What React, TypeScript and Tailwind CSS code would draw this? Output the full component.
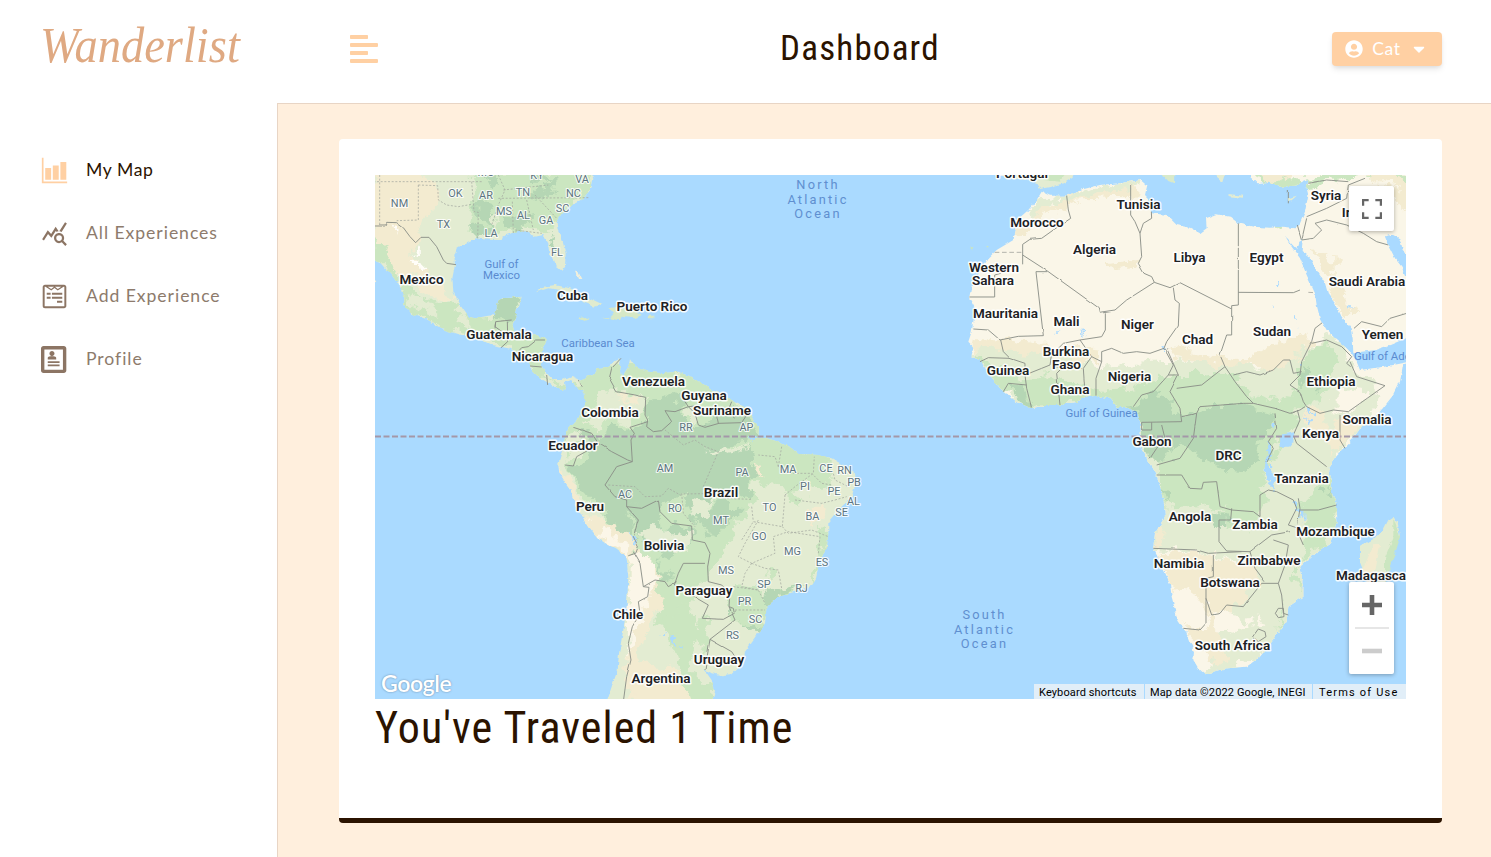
import { FaAlignLeft, FaCaretDown, FaUserCircle, FaWpforms } from 'react-icons/fa';
import { ImProfile } from 'react-icons/im';
import { IoBarChartSharp } from 'react-icons/io5';
import { MdQueryStats } from 'react-icons/md';

const NORTH_AMERICA =
  'M-10,-10 650,-10 655,10 650,40 620,75 590,90 560,115 545,140 548,165 562,195 572,235 570,270 560,287 545,275 535,250 522,235 520,205 505,180 480,185 450,168 410,175 385,183 380,195 350,195 300,190 270,205 245,220 238,240 240,270 232,310 235,350 255,390 280,425 300,430 340,422 360,420 370,380 385,370 440,365 435,385 425,405 420,430 412,450 420,475 450,480 480,478 515,495 505,520 500,560 500,575 520,600 535,615 560,615 590,603 610,612 628,625 628,650 612,645 600,628 585,615 570,622 572,640 560,645 530,630 505,615 485,600 465,580 465,560 430,535 400,520 350,510 330,500 290,480 260,480 210,465 150,430 115,420 85,390 85,365 75,335 50,300 20,265 -10,252Z';

const SOUTH_AMERICA =
  'M105,125 120,165 120,195 100,235 70,265 58,300 52,330 40,370 42,395 60,425 78,450 95,500 112,530 135,565 165,600 210,625 245,650 250,720 245,800 235,870 222,940 218,990 200,1040 183,1090 500,1090 510,1050 500,1020 475,985 500,1000 530,1006 560,1002 593,968 600,935 630,895 660,850 665,800 700,770 750,755 790,745 810,715 820,670 845,625 850,580 850,545 880,510 920,470 932,430 925,395 905,382 860,355 820,345 760,342 740,325 700,305 665,295 640,292 642,260 620,235 605,205 570,185 540,170 470,130 430,108 400,95 350,100 310,95 270,80 255,58 250,80 235,105 222,90 228,55 200,68 190,80 155,85 145,105 125,110Z';

const AFRICA =
  'M245,50 270,62 320,62 360,45 420,30 480,25 545,15 562,30 555,60 575,80 570,100 575,115 620,120 650,150 690,158 720,175 740,160 738,130 770,118 810,125 835,145 880,155 930,158 970,155 1005,160 1020,145 1035,110 1045,60 1040,40 1045,15 1030,20 1005,32 960,35 930,20 890,25 870,5 870,-15 1350,-15 1350,562 1330,568 1320,620 1300,660 1260,710 1220,750 1195,765 1170,800 1130,840 1105,875 1115,915 1110,945 1130,985 1132,1045 1110,1105 1070,1130 1020,1175 1030,1215 1030,1265 985,1295 980,1340 940,1395 900,1445 860,1475 800,1480 735,1498 715,1480 700,1455 702,1430 685,1385 655,1340 635,1265 630,1225 600,1160 580,1120 585,1075 615,1025 610,965 590,900 565,855 540,815 543,750 535,720 510,700 470,695 450,670 410,662 380,665 350,680 300,690 260,690 215,700 170,680 120,640 90,600 60,555 35,545 40,515 25,500 35,470 40,440 45,400 28,370 35,330 60,290 85,250 110,225 160,195 170,160 165,140 205,105 230,75Z';

const MADAGASCAR =
  'M1300,1025 1313,1045 1320,1085 1306,1105 1292,1165 1275,1225 1260,1290 1230,1290 1215,1240 1222,1220 1200,1165 1200,1115 1240,1092 1270,1065 1285,1035Z';

const RED_SEA =
  'M975,182 995,215 1020,250 1040,300 1065,355 1070,390 1080,430 1100,465 1125,490 1150,510 1175,535 1190,560 1200,585 1270,575 1350,560 1350,485 1290,510 1245,525 1205,530 1180,535 1178,490 1172,460 1145,425 1125,385 1105,360 1095,325 1070,285 1048,245 1025,228 1028,195 1018,200 1012,222Z';

const PERSIAN_GULF = 'M1275,185 1295,178 1318,190 1328,225 1350,245 1350,310 1335,300 1325,275 1305,250 1285,210Z';

const NA_BORDERS =
  'M-5,153 30,153 35,142 65,143 85,158 105,185 122,203 138,187 162,187 185,215 205,255 215,265 243,269 M360,460 362,440 410,435 M362,442 360,455 395,480 398,500 378,518 M397,440 398,485 430,480 M425,535 440,518 460,515 485,495 510,495 M465,573 500,576 M515,600 518,630 M610,615 625,640';
const NA_STATES =
  'M-5,20 320,20 M14,0 14,153 M130,30 130,135 65,137 M130,30 188,32 190,75 215,90 250,95 290,88 M290,20 297,110 310,112 308,190 M370,0 390,45 370,90 350,150 M412,80 415,175 M370,70 640,68 M455,75 475,165 M420,165 500,175 M385,45 520,30 M480,60 545,130';

const SA_BORDERS =
  'M228,55 200,85 193,115 215,155 270,165 302,172 300,225 308,240 305,260 325,275 350,272 380,245 360,212 390,215 430,200 450,198 M410,170 430,200 450,220 460,255 480,262 522,250 590,248 605,225 M510,200 520,250 M560,185 552,205 568,235 M85,262 140,280 160,310 200,335 248,360 262,365 258,300 268,280 255,262 308,245 M60,375 85,378 95,350 140,325 145,305 M262,365 215,380 180,435 210,470 245,480 245,500 290,505 340,480 345,515 380,550 440,558 442,600 480,608 495,640 488,680 490,725 530,735 555,760 552,800 565,805 568,820 535,838 472,835 490,795 430,760 388,735 400,700 415,670 480,670 M245,500 280,540 265,590 280,620 272,640 250,647 M265,635 285,670 295,740 330,720 360,725 370,740 395,725 M295,740 312,742 308,770 280,785 285,820 262,860 250,910 258,960 245,1010 235,1085 M552,800 570,840 495,898 480,990 M495,898 560,935 580,965';
const SA_STATES =
  'M190,435 270,440 300,470 350,468 370,445 415,470 M415,462 535,460 M475,440 520,335 480,320 450,300 415,315 360,270 M535,475 620,478 M410,460 415,520 450,560 M620,500 625,545 M710,320 700,380 740,400 800,400 830,430 860,435 M700,380 690,350 640,345 M720,465 750,440 805,400 808,350 M720,465 712,560 625,545 590,600 M750,480 830,490 870,480 M860,380 870,420 910,440 M870,480 905,470 M712,560 730,580 800,570 850,590 M640,540 600,610 580,650 620,670 690,640 685,590 730,575 825,590 820,640 M620,670 600,700 590,740 640,750 M620,670 660,685 700,690 710,745 M565,740 640,750 660,790 M570,810 660,810';

const AFRICA_BORDERS =
  'M320,62 325,105 332,130 310,145 280,165 245,190 210,193 188,208 188,268 M188,240 262,288 415,398 418,412 465,405 500,375 583,322 630,338 660,323 815,402 815,392 835,390 835,145 M262,290 228,290 250,482 175,484 120,495 85,465 40,462 M122,295 104,300 104,366 28,366 M436,412 436,465 425,485 360,495 310,505 275,540 270,570 M583,322 575,305 552,295 535,265 545,245 540,175 525,140 512,120 512,30 M540,175 550,145 575,130 574,110 M640,338 645,375 658,385 655,450 620,500 612,520 570,535 530,530 490,535 455,520 425,530 425,560 408,610 408,662 M425,560 395,545 370,580 375,655 M360,495 395,545 M310,575 290,595 300,690 M122,495 130,530 150,550 85,548 60,560 M150,550 195,565 195,600 245,580 270,570 M145,625 130,650 M195,600 200,640 215,700 M145,625 200,630 M280,575 365,580 M612,520 640,570 625,600 580,650 545,660 520,695 M620,520 655,600 625,600 M655,600 630,650 660,700 665,740 545,742 M815,402 815,480 800,480 780,540 795,575 725,630 650,640 M795,575 825,620 860,665 880,685 M665,725 710,715 720,695 850,685 880,685 945,700 990,715 1020,705 1035,695 M820,600 860,590 900,600 940,585 970,555 990,555 1000,595 1025,590 M835,352 1000,353 1020,345 M1097,435 1065,460 1055,500 1025,560 1020,600 990,630 1020,650 1030,680 1040,695 1080,715 1120,705 1165,710 1275,632 1190,605 1170,560 M1055,505 1100,495 1145,515 1175,545 1160,565 1172,575 M545,742 545,765 575,765 575,742 M605,750 615,790 590,820 570,850 M710,715 700,790 660,850 590,870 M945,715 950,760 925,800 M1012,705 1020,735 1000,780 1010,805 1100,875 M1140,720 1140,795 1155,820 M590,900 665,900 690,940 725,942 730,922 770,920 780,995 815,1005 880,1010 900,1025 900,960 925,945 950,950 1000,975 1010,1000 985,1050 1015,1060 M1020,1005 1075,1005 1130,990 M815,1000 812,1035 777,1035 777,1100 800,1128 870,1130 915,1095 935,1080 990,1070 M580,1120 710,1125 745,1135 845,1130 M760,1140 760,1205 738,1210 738,1345 720,1365 670,1360 M738,1270 755,1320 780,1315 800,1290 850,1295 865,1275 905,1225 955,1225 975,1170 985,1110 940,1095 M870,1130 885,1180 915,1220 M955,1225 965,1260 970,1315 985,1320 M946,1315 955,1300 970,1300 972,1325 955,1328Z M878,1385 895,1362 915,1370 918,1385 895,1400Z M1015,970 1020,1000 1010,1065 1030,1110 M1025,195 1060,190 1085,165 1065,145 1100,135 1160,150 1210,175 1250,200 1285,210 M1040,125 1100,100 1160,70 1165,30 1215,10 M1045,25 1100,15 1165,20 M1205,440 1265,455 1290,430 1350,412 M1182,460 1205,440 M1012,150 1025,195 1040,130 M925,800 940,820 920,860 M985,45 985,85';

type Shape = [fill: string, d: string];

const NA_TERRAIN: Shape[] = [
  ['#f3ebd0', 'M-10,-10 120,-10 190,25 190,90 150,140 110,230 190,310 230,380 200,385 130,330 80,300 30,230 -10,190Z'],
  ['#cbe6c0', 'M-10,190 25,220 60,270 90,320 140,375 220,390 260,430 350,425 370,375 440,360 420,450 520,490 500,560 530,620 628,620 628,650 560,645 460,570 380,510 240,470 120,420 80,380 60,310 0,255Z'],
  ['#cbe6c0', 'M290,10 350,-10 660,-10 640,60 570,100 540,150 500,175 440,160 400,180 280,170 300,100Z'],
  ['#b5d6b4', 'M372,375 440,362 418,430 362,435 350,420Z'],
  ['#b5d6b4', 'M315,0 360,-5 380,20 345,30Z M310,75 345,80 360,120 350,150 310,130Z M280,145 340,150 350,180 290,175Z M470,60 545,10 570,15 515,70 470,90Z M385,130 450,100 475,120 430,165 390,165Z M520,170 535,190 550,225 540,235Z M470,0 500,-5 530,20 475,20Z'],
  ['#fffdf8', 'M50,150 65,165 60,180Z M115,260 150,260 140,285 125,275Z M125,220 135,230 125,240Z'],
  ['#e3ecd2', 'M90,350 150,380 200,420 180,425 110,390Z M250,425 290,440 280,460 240,450Z M345,110 370,120 350,155Z'],
];

const SA_TERRAIN: Shape[] = [
  ['#cbe6c0', 'M110,80 260,60 450,100 640,230 760,340 860,355 860,440 790,430 740,470 710,440 640,430 560,600 450,760 420,900 330,860 340,700 100,460 40,300Z'],
  ['#b5d6b4', 'M75,262 165,285 245,250 300,260 300,190 350,160 420,170 400,210 450,255 560,200 610,215 635,250 625,290 530,330 600,320 640,400 625,455 580,480 530,465 490,510 540,490 590,500 560,550 500,590 460,560 430,470 350,480 250,500 270,600 230,590 180,520 120,460 80,400 130,340 100,290Z'],
  ['#b5d6b4', 'M245,500 340,480 350,560 440,560 440,600 350,660 370,720 350,730 350,640 290,590Z'],
  ['#e3ecd2', 'M205,170 300,165 295,215 250,245 190,235 150,270 160,220Z M415,200 450,200 455,240 425,240Z M490,335 600,315 560,340 500,350Z M450,480 510,490 480,530 440,510Z M280,575 360,560 390,590 430,570 430,620 380,640Z'],
  ['#f3ebd0', 'M35,370 80,430 130,530 190,545 270,600 280,650 350,700 340,780 310,850 280,970 320,1085 235,1085 255,880 250,650 120,560 50,430Z'],
  ['#f3ebd0', 'M270,960 400,990 440,1090 260,1090Z M205,175 290,170 270,190Z M630,370 690,400 640,415Z M790,500 840,500 800,560Z'],
  ['#fbf6e8', 'M250,640 285,640 330,680 350,725 320,760 290,820 270,870 250,960 245,850 252,720Z M180,570 250,610 245,640 170,590Z M130,540 150,580 100,500Z'],
  ['#cbe6c0', 'M750,340 860,355 830,400 770,390Z M720,460 780,470 750,510Z M660,320 720,350 700,420 650,400Z M830,560 850,590 820,710 790,740 815,650Z M560,740 640,750 660,770 780,730 740,765 670,800 640,860 560,850Z M450,880 490,830 480,960Z M360,840 430,790 460,880 420,990 500,1030 510,1090 440,1090 410,1010Z M670,680 700,690 690,720 660,715Z'],
  ['#b5d6b4', 'M650,770 690,760 770,735 720,770 670,800Z M545,810 568,800 560,830Z M590,850 650,860 640,880Z'],
  ['#aadaff', 'M255,590 272,600 265,615Z M385,905 405,895 400,918Z M340,900 368,872 345,904Z M610,935 632,900 605,925Z M615,290 630,290 605,320Z'],
  ['#e3ecd2', 'M80,265 105,275 100,330 75,370 55,350Z M180,150 215,155 160,235 120,250Z'],
];

const AF_TERRAIN: Shape[] = [
  ['#e3ecd2', 'M0,535 130,520 290,530 420,575 620,560 700,560 800,560 900,590 980,540 1040,520 1110,480 1170,530 1180,590 1260,640 1240,700 1200,770 1130,850 1140,1050 1040,1260 960,1400 800,1500 730,1500 770,1390 790,1310 880,1240 860,1150 560,1120 500,780 200,720Z'],
  ['#f3ebd0', 'M25,490 130,490 300,520 420,530 420,565 280,545 120,525 40,530Z M620,520 790,545 850,560 960,500 1030,480 1060,500 1000,550 930,585 800,570 650,555Z M175,160 240,100 300,90 330,55 510,30 540,70 460,75 350,80 260,130 180,190Z M430,265 530,250 525,275 460,285Z'],
  ['#e3ecd2', 'M230,70 330,65 420,32 540,18 545,35 440,55 260,95 200,130Z'],
  ['#cbe6c0', 'M40,545 110,570 200,610 300,600 380,640 450,650 520,640 600,600 700,600 820,595 870,660 960,680 1020,630 1020,560 1060,510 1100,500 1140,560 1080,680 1020,710 960,790 920,890 900,1010 780,1010 730,990 600,1000 600,880 540,740 460,690 350,680 210,700 120,650Z'],
  ['#b5d6b4', 'M150,625 190,620 210,700 150,665Z M520,690 590,650 640,680 665,730 710,715 740,690 850,690 940,720 935,770 900,800 890,860 830,890 760,870 700,830 650,790 630,850 570,860 540,750Z'],
  ['#cbe6c0', 'M1105,880 1140,1050 1070,1130 1000,1170 1030,1220 1020,1260 1000,1190 1040,1070 1010,1000 1080,940Z M790,1005 900,1010 880,1060 800,1060Z M980,1270 950,1370 970,1330Z M920,158 975,155 950,178Z'],
  ['#b5d6b4', 'M1030,570 1060,590 1040,620 1020,640Z M1060,620 1080,640 1070,660Z M610,940 630,950 625,1000Z M1300,1060 1318,1085 1300,1110Z M1095,930 1110,960 1090,960Z M750,1010 800,1020 795,1050 760,1050Z'],
  ['#f3ebd0', 'M600,1010 615,1025 600,1110 580,1110Z M600,1130 750,1140 870,1160 900,1220 840,1290 770,1360 800,1450 740,1470 720,1400 680,1360 640,1250Z M1140,730 1200,730 1170,800 1120,830 1100,780Z M1060,225 1100,250 1130,250 1130,300 1080,290Z M1110,340 1150,350 1190,420 1150,420Z M1250,40 1350,50 1350,110 1280,60Z M1040,700 1100,720 1080,790 1040,750Z'],
  ['#fbf6e8', 'M640,1230 700,1240 740,1300 730,1370 690,1350 650,1320Z M750,1300 830,1320 870,1350 830,1380 760,1370Z M880,1330 920,1340 900,1360Z M1130,640 1230,650 1200,710 1130,700Z'],
  ['#cbe6c0', 'M865,-10 960,-10 990,10 1045,10 1100,-10 1350,-10 1350,20 1200,5 1040,40 950,40Z'],
  ['#f3ebd0', 'M890,-10 1010,-10 960,20Z M1200,-10 1300,-10 1350,30 1350,60Z'],
  ['#aadaff', 'M918,805 930,810 930,880 950,920 945,950 920,900Z M1010,975 1020,975 1022,1050 1012,1030Z M1045,700 1055,720 1052,738 1042,715Z M940,745 955,740 942,765Z M1015,555 1025,552 1022,565Z M945,335 968,315 955,345Z M935,380 940,390 938,400Z M1000,415 1025,455 1005,435Z M1170,385 1176,380 1172,408Z M600,515 612,510 610,525Z M355,455 372,485 360,475Z M275,475 305,460 290,470Z'],
];

type Label = [text: string, x: number, y: number];

const COUNTRIES: Label[] = [
  ['Mexico', 421.5, 284], ['Cuba', 572.5, 300.5], ['Puerto Rico', 652, 311.5], ['Guatemala', 499, 339.5],
  ['Nicaragua', 542.5, 361.5], ['Venezuela', 653.5, 386.5], ['Guyana', 704, 400], ['Suriname', 722, 415.5],
  ['Colombia', 610, 417], ['Ecuador', 573, 450.5], ['Brazil', 721, 497], ['Peru', 590, 511.5],
  ['Bolivia', 664, 550.5], ['Paraguay', 704, 595], ['Chile', 628, 619.5], ['Uruguay', 719, 664],
  ['Argentina', 661, 683], ['Portugal', 1022, 178], ['Morocco', 1037, 227], ['Tunisia', 1138.5, 209.5],
  ['Algeria', 1094.5, 254], ['Libya', 1189.5, 262], ['Egypt', 1266.5, 262], ['Syria', 1326, 200],
  ['Western', 994, 272], ['Sahara', 993, 285.5], ['Mauritania', 1005.5, 318], ['Mali', 1066.5, 326],
  ['Niger', 1137.5, 329], ['Chad', 1197.5, 344.5], ['Sudan', 1272, 336], ['Saudi Arabia', 1367, 286],
  ['Yemen', 1382.5, 339], ['Burkina', 1066, 356], ['Faso', 1066.5, 369.5], ['Guinea', 1008, 375],
  ['Ghana', 1070, 394.5], ['Nigeria', 1129.5, 381], ['Ethiopia', 1331, 386], ['Somalia', 1367, 424],
  ['Kenya', 1320.5, 438.5], ['Gabon', 1152, 446.5], ['DRC', 1228.5, 460.5], ['Tanzania', 1301.5, 483.5],
  ['Angola', 1190, 521.5], ['Zambia', 1255, 529], ['Mozambique', 1335.5, 536.5], ['Namibia', 1179, 568],
  ['Zimbabwe', 1269, 565.5], ['Botswana', 1230, 587.5], ['South Africa', 1232.5, 650], ['Madagascar', 1373.5, 580.5],
  ['Iraq', 1353.5, 217],
];

const STATES: Label[] = [
  ['NM', 399.5, 207], ['OK', 455.5, 197.5], ['AR', 486, 199], ['TN', 523, 196], ['KY', 537, 179.5], ['MO', 486, 176.5],
  ['VA', 582, 183], ['NC', 573.5, 197], ['SC', 562.5, 212.5], ['MS', 504, 215], ['AL', 523.5, 219], ['GA', 546, 224.5],
  ['TX', 443.5, 228.5], ['LA', 491, 237.5], ['FL', 557, 256.5], ['RR', 686, 431], ['AP', 746.5, 431],
  ['AM', 665, 472.5], ['PA', 742, 476], ['MA', 788, 473], ['CE', 826, 472], ['RN', 844.5, 474.5], ['PB', 854, 486.5],
  ['PI', 805, 490], ['PE', 834, 495], ['AL', 853.5, 505], ['SE', 841.5, 516], ['AC', 625, 498], ['RO', 675, 512],
  ['TO', 769.5, 511], ['BA', 812.5, 520.5], ['MT', 721, 524], ['GO', 759, 540], ['MG', 792.5, 555], ['ES', 822, 566],
  ['MS', 726, 574.5], ['SP', 764, 588], ['RJ', 801.5, 592.5], ['PR', 744.5, 605], ['SC', 755.5, 623], ['RS', 732.5, 639.5],
];

const SEAS: Label[] = [
  ['Gulf of', 501.5, 268.5], ['Mexico', 501.5, 279.5], ['Caribbean Sea', 598, 347], ['Gulf of Guinea', 1101.5, 417], ['Gulf of Aden', 1385.5, 360],
];

const OCEANS: Label[] = [
  ['North', 818, 189.5], ['Atlantic', 818, 204], ['Ocean', 818, 218.5],
  ['South', 984.5, 619.5], ['Atlantic', 984.5, 634], ['Ocean', 984.5, 648.5],
];

type RegionProps = {
  id: string;
  origin: string;
  base: string;
  land: string;
  terrain: Shape[];
  borders: string;
  states?: string;
};

function Region({ id, origin, base, land, terrain, borders, states }: RegionProps) {
  return (
    <g transform={`translate(${origin}) scale(0.33333)`} strokeLinejoin="round">
      <clipPath id={id}>
        <path d={land} />
      </clipPath>
      <g filter="url(#rugged)">
        <path d={land} fill={base} />
        <g clipPath={`url(#${id})`}>
          {terrain.map(([fill, d], i) => (
            <path key={i} d={d} fill={fill} filter="url(#terrain)" />
          ))}
        </g>
      </g>
      <path d={borders} fill="none" stroke="#8b8f88" strokeWidth="2.8" filter="url(#wavy)" />
      {states && <path d={states} fill="none" stroke="#a3a79f" strokeWidth="2.2" strokeDasharray="6 5" />}
    </g>
  );
}

function Labels({ items, className }: { items: Label[]; className: string }) {
  return (
    <g className={className} textAnchor="middle" transform="translate(0 -0.4)">
      {items.map(([text, x, y], i) => (
        <text key={i} x={x} y={y}>
          {text}
        </text>
      ))}
    </g>
  );
}

function WorldMap() {
  return (
    <svg viewBox="375 175 1031 524" className="block h-full w-full font-['Roboto',sans-serif]">
      <defs>
        <filter id="rugged" x="-5%" y="-5%" width="110%" height="110%">
          <feTurbulence type="fractalNoise" baseFrequency="0.05" numOctaves="3" seed="4" result="n" />
          <feDisplacementMap in="SourceGraphic" in2="n" scale="13" xChannelSelector="R" yChannelSelector="G" />
        </filter>
        <filter id="wavy" x="-5%" y="-5%" width="110%" height="110%">
          <feTurbulence type="fractalNoise" baseFrequency="0.03" numOctaves="1" seed="4" result="n" />
          <feDisplacementMap in="SourceGraphic" in2="n" scale="7" xChannelSelector="R" yChannelSelector="G" />
        </filter>
        <filter id="terrain" x="-10%" y="-10%" width="120%" height="120%">
          <feTurbulence type="fractalNoise" baseFrequency="0.022" numOctaves="4" seed="9" result="n" />
          <feDisplacementMap in="SourceGraphic" in2="n" scale="65" xChannelSelector="R" yChannelSelector="G" />
        </filter>
      </defs>
      <rect x="375" y="175" width="1031" height="524" fill="#aadaff" />
      <Region id="north" origin="375 175" base="#e3ecd2" land={NORTH_AMERICA} terrain={NA_TERRAIN} borders={NA_BORDERS} states={NA_STATES} />
      <Region id="south" origin="545 340" base="#e3ecd2" land={SOUTH_AMERICA} terrain={SA_TERRAIN} borders={SA_BORDERS} states={SA_STATES} />
      <Region id="africa" origin="960 175" base="#faf6e8" land={AFRICA} terrain={AF_TERRAIN} borders={AFRICA_BORDERS} />
      <g transform="translate(960 175) scale(0.33333)">
        <g filter="url(#rugged)">
          <path d={RED_SEA} fill="#aadaff" />
          <path d={PERSIAN_GULF} fill="#aadaff" />
          <path d="M968,778 1003,772 1000,800 988,815 963,815 960,795Z" fill="#aadaff" />
          <path d={MADAGASCAR} fill="#e3ecd2" />
          <path d="M1300,1030 1320,1085 1300,1150 1275,1225 1275,1150 1300,1090Z" fill="#cbe6c0" />
          <path d="M1210,1180 1240,1110 1260,1110 1240,1220 1220,1220Z" fill="#f3ebd0" />
          <path d="M60,-10 175,12 225,18 240,42 270,36 312,25 338,8 342,-10Z" fill="#e3ecd2" />
          <path d="M150,-10 250,-10 320,-5 300,20 200,10Z" fill="#cbe6c0" />
          <path d="M598,-10 625,18 645,26 646,-10Z" fill="#d9eaca" />
          <path d="M765,-10 775,12 790,25 796,5 790,-10Z M805,57 850,62 845,68 808,64Z M978,72 1010,62 995,76 982,78Z" fill="#e3ecd2" />
          <path d="M30,218 40,215 36,224Z M78,214 86,212 84,218Z" fill="#cbe6c0" />
        </g>
        <path d="M1045,352 1065,353 M104,232 186,232" fill="none" stroke="#b4b4ac" strokeWidth="3" strokeDasharray="14 8" />
      </g>
      <g transform="translate(375 175) scale(0.33333)" filter="url(#rugged)">
        <path d="M483,352 505,335 540,330 585,340 620,358 655,375 682,388 660,395 625,382 600,360 560,345 520,340Z" fill="#e0ebcf" />
        <path d="M610,430 625,424 645,432 630,438Z M682,428 705,425 718,410 700,400 730,395 770,400 800,420 780,430 740,425 735,436 700,430Z M820,422 840,422 838,430 822,430Z" fill="#d6e8c6" />
        <path d="M603,290 612,292 622,312 612,312Z M-5,310 5,320 -5,330Z" fill="#f0efdc" />
      </g>
      <path d="M375 436.5H1406" stroke="#a497a8" strokeWidth="2" strokeDasharray="6 2.5" />
      <Labels items={OCEANS} className="fill-[#5f8fd0] text-[12.8px] tracking-[2.2px]" />
      <Labels items={SEAS} className="fill-[#5a8bd0] text-[11.4px]" />
      <Labels
        items={STATES}
        className="fill-[#5c7480] stroke-white/80 stroke-[2.2px] text-[10.9px] [paint-order:stroke] [stroke-linejoin:round]"
      />
      <Labels
        items={COUNTRIES}
        className="fill-[#202124] stroke-white/90 stroke-[3px] text-[13.5px] font-semibold [paint-order:stroke] [stroke-linejoin:round]"
      />
    </svg>
  );
}

function MapPanel() {
  return (
    <div className="relative h-[524px] w-full overflow-hidden">
      <WorldMap />
      <button className="absolute top-[11px] right-3 flex size-[45px] items-center justify-center rounded-[2px] bg-white shadow-[0_1px_4px_rgba(0,0,0,0.3)]">
        <svg viewBox="0 0 18 18" className="size-5 fill-[#666]">
          <path d="M0 0v6h2V2h4V0H0zm16 0h-4v2h4v4h2V0h-2zm0 16h-4v2h6v-6h-2v4zM2 12H0v6h6v-2H2v-4z" />
        </svg>
      </button>
      <div className="absolute right-3 bottom-[25px] flex h-[92px] w-[45px] flex-col items-center rounded-[2px] bg-white shadow-[0_1px_4px_rgba(0,0,0,0.3)]">
        <button className="flex h-[45px] items-center">
          <svg viewBox="0 0 20 20" className="size-5 fill-[#666]">
            <path d="M7.7 0h4.6v7.7H20v4.6h-7.7V20H7.7v-7.7H0V7.7h7.7z" />
          </svg>
        </button>
        <div className="h-0.5 w-[34px] bg-[#e6e6e6]" />
        <button className="flex h-[43px] items-center">
          <svg viewBox="0 0 20 20" className="size-5 fill-[#ccc]">
            <path d="M0 7.7h20v4.6H0z" />
          </svg>
        </button>
      </div>
      <span className="absolute bottom-0 left-[6px] font-['Lato',sans-serif] text-[23px] leading-[31px] font-semibold tracking-[-0.4px] text-white [text-shadow:0_0_2px_rgba(80,110,140,0.8)]">
        Google
      </span>
      <div className="absolute right-0 bottom-0 flex h-[15px] gap-px font-['Roboto',sans-serif] text-[11px] leading-[17px] whitespace-nowrap text-black">
        <span className="w-[110px] bg-[#e1eef8] pl-[5px] tracking-[0.12px]">Keyboard shortcuts</span>
        <span className="w-[167px] bg-[#e1eef8] pl-[5px] tracking-[0.12px]">Map data ©2022 Google, INEGI</span>
        <span className="w-[93px] bg-[#e1eef8] pl-1.5 tracking-[1.2px]">Terms of Use</span>
      </div>
    </div>
  );
}

const NAV = [
  { label: 'My Map', Icon: IoBarChartSharp, active: true },
  { label: 'All Experiences', Icon: MdQueryStats, active: false },
  { label: 'Add Experience', Icon: FaWpforms, active: false },
  { label: 'Profile', Icon: ImProfile, active: false },
];

export default function App() {
  return (
    <div className="flex h-[857px] w-full flex-col overflow-hidden bg-white font-['Lato',sans-serif] text-[#2b1300]">
      <header className="flex h-[104px] shrink-0">
        <div className="flex w-[277px] shrink-0 pt-4 pl-10">
          <span className="h-14 origin-left scale-x-[0.93] font-['Liberation_Serif',serif] text-[50px] leading-[58px] text-[#dfa982] italic">
            Wanderlist
          </span>
        </div>
        <div className="flex flex-1 items-start border-b border-[#e8d5c5] pr-[49px] pl-[71px]">
          <button className="mt-[33px] text-[32px] text-[#ffd0a3]">
            <FaAlignLeft />
          </button>
          <h1 className="mt-[25px] ml-[400px] flex-1 font-['Roboto_Condensed','Roboto',sans-serif] text-[35px] leading-[47px] tracking-[1.2px] whitespace-nowrap [font-stretch:75%]">
            Dashboard
          </h1>
          <button className="mt-8 flex h-[34px] w-[110px] items-center rounded bg-[#ffd0a3] pl-[13px] text-lg text-white shadow-[0_4px_6px_-1px_rgba(0,0,0,0.1),0_2px_4px_-1px_rgba(0,0,0,0.06)]">
            <FaUserCircle className="shrink-0" />
            <span className="mr-[9px] ml-[9px] w-[29px] text-[17.5px] tracking-[0.7px]">Cat</span>
            <FaCaretDown className="shrink-0" />
          </button>
        </div>
      </header>
      <div className="flex flex-1">
        <aside className="flex w-[278px] shrink-0 flex-col border-r border-[#e8d5c5] pt-[35px] pl-[40.5px]">
          {NAV.map(({ label, Icon, active }) => (
            <a key={label} className={`flex h-[63px] items-center ${active ? 'text-[#2b1300]' : 'text-[#8d7b6c]'}`}>
              <Icon className={`mb-px size-[27px] ${active ? 'text-[#ffd0a3]' : 'text-[#8c7564]'}`} />
              <span
                className={`ml-[18.5px] pb-px text-[17.6px] ${active ? 'tracking-[0.6px]' : 'tracking-[0.95px]'}`}
              >
                {label}
              </span>
            </a>
          ))}
        </aside>
        <main className="flex-1 bg-[#ffefdd] pt-[35px] pr-[49px] pl-[61px]">
          <section className="h-[684px] rounded border-b-[5px] border-[#2b1300] bg-white px-9 pt-9">
            <MapPanel />
            <h2 className="pt-[2px] font-['Roboto_Condensed','Roboto',sans-serif] text-[44px] leading-[54px] tracking-[1.05px] whitespace-nowrap [font-stretch:75%]">
              You've Traveled 1 Time
            </h2>
          </section>
        </main>
      </div>
    </div>
  );
}
